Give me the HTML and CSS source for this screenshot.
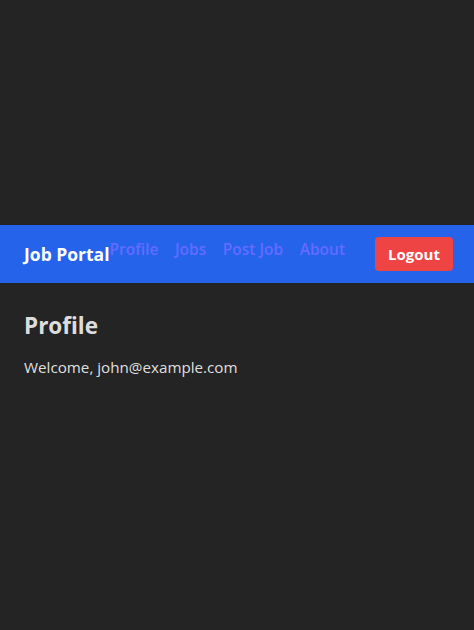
FILE: index.html
```html
<!DOCTYPE html>
<html>
<head>
<meta charset="utf-8">
<link rel="stylesheet" href="styles.css">
</head>
<body>
<div class="app">
  <nav class="nav">
    <div class="brand-group">
      <span class="brand">Job Portal</span>
      <div class="links">
        <a href="#">Profile</a>
        <a href="#">Jobs</a>
        <a href="#">Post Job</a>
        <a href="#">About</a>
      </div>
    </div>
    <button class="logout">Logout</button>
  </nav>
  <main class="main">
    <h2 class="title">Profile</h2>
    <p class="welcome">Welcome, john@example.com</p>
  </main>
</div>
</body>
</html>
```
FILE: styles.css
```css
html, body {
  margin: 0;
  padding: 0;
}
body {
  background: #242424;
  color: rgba(255,255,255,0.87);
  font-family: "Open Sans", "Noto Sans", sans-serif;
  min-height: 100vh;
  display: flex;
  flex-direction: column;
  justify-content: center;
}
.app {
  width: 100%;
}
.nav {
  background: #2563eb;
  height: 58px;
  box-sizing: border-box;
  padding: 0 21px 0 24px;
  display: flex;
  align-items: center;
  justify-content: space-between;
}
.brand-group {
  display: flex;
  align-items: center;
}
.brand {
  color: #fff;
  font-weight: 700;
  font-size: 17.5px;
}
.links {
  display: flex;
  gap: 16.5px;
  margin-bottom: 10px;
}
.links a {
  color: #646cff;
  font-weight: 600;
  font-size: 15.5px;
  text-decoration: none;
}
.logout {
  background: #ef4444;
  color: #fff;
  border: none;
  border-radius: 4px;
  font-family: inherit;
  font-weight: 700;
  font-size: 15px;
  height: 34px;
  padding: 0 13px;
}
.main {
  padding: 25px 24px 0;
  height: 122px;
  box-sizing: border-box;
}
.title {
  margin: 0;
  font-size: 22.5px;
  font-weight: 700;
  line-height: 36px;
  color: rgba(255,255,255,0.87);
}
.welcome {
  margin: 12px 0 0;
  font-size: 15.2px;
  line-height: 22px;
}
```
